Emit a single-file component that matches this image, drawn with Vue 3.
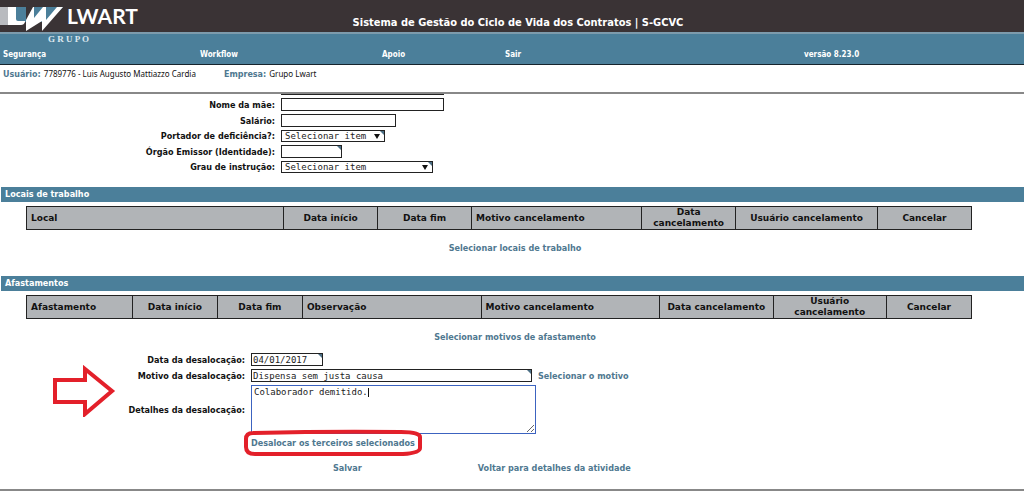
<script setup>
import { ref } from 'vue'

const menu = ['Segurança', 'Workflow', 'Apoio', 'Sair']

const workplaces = [
  { label: 'Local', left: true },
  { label: 'Data início' },
  { label: 'Data fim' },
  { label: 'Motivo cancelamento', left: true },
  { label: 'Data cancelamento' },
  { label: 'Usuário cancelamento' },
  { label: 'Cancelar' },
]
const leaves = [
  { label: 'Afastamento', left: true },
  { label: 'Data início' },
  { label: 'Data fim' },
  { label: 'Observação', left: true },
  { label: 'Motivo cancelamento', left: true },
  { label: 'Data cancelamento' },
  { label: 'Usuário cancelamento' },
  { label: 'Cancelar' },
]

const releaseDate = ref('04/01/2017')
const reason = ref('Dispensa sem justa causa')
const details = ref('Colaborador demitido.')
</script>

<template>
  <div class="page">
    <header>
      <div class="banner">
        <svg class="logo" viewBox="0 0 145 48" role="img" aria-label="Lwart Grupo">
          <rect x="0" y="7" width="9" height="18" fill="#b9bbbf" />
          <path d="M16 7H26V22H16ZM34 7H63L48 22H34Z" fill="#4b7f9a" />
          <path d="M8 7H16V19Q16 21 18 21H25V22Q24 25 21 25H8Z" fill="#fff" />
          <path d="M26 20L33 7H34V18L43 7H46V20L57 7H63L42 31V21L26 31Z" fill="#fff" />
          <text x="67" y="24" class="logo-name">LWART</text>
          <text x="48" y="42" class="logo-sub">G R U P O</text>
        </svg>
        <h1>Sistema de Gestão do Ciclo de Vida dos Contratos | S-GCVC</h1>
      </div>
      <nav>
        <a v-for="item in menu" :key="item" href="#">{{ item }}</a>
        <span>versão 8.23.0</span>
      </nav>
      <div class="session">
        <p><b>Usuário:</b> 7789776 - Luis Augusto Mattiazzo Cardia</p>
        <p><b>Empresa:</b> Grupo Lwart</p>
      </div>
    </header>

    <main>
      <form class="fields personal" @submit.prevent>
        <span></span><input class="w-long previous" type="text" aria-label="Nome do pai" />
        <label for="mother">Nome da mãe:</label>
        <input id="mother" class="w-long" type="text" />
        <label for="salary">Salário:</label>
        <input id="salary" class="w-mid" type="text" />
        <label for="disability">Portador de deficiência?:</label>
        <div class="control drop w-select">
          <select id="disability"><option>Selecionar item</option></select>
        </div>
        <label for="issuer">Órgão Emissor (Identidade):</label>
        <div class="control w-issuer"><input id="issuer" type="text" /></div>
        <label for="education">Grau de instrução:</label>
        <div class="control drop w-education">
          <select id="education"><option>Selecionar item</option></select>
        </div>
      </form>

      <section>
        <h2>Locais de trabalho</h2>
        <table class="workplaces">
          <colgroup><col v-for="c in workplaces" :key="c.label" /></colgroup>
          <thead>
            <tr><th v-for="c in workplaces" :key="c.label" :class="{ left: c.left }">{{ c.label }}</th></tr>
          </thead>
        </table>
        <p class="pick"><a href="#">Selecionar locais de trabalho</a></p>
      </section>

      <section>
        <h2>Afastamentos</h2>
        <table class="leaves">
          <colgroup><col v-for="c in leaves" :key="c.label" /></colgroup>
          <thead>
            <tr><th v-for="c in leaves" :key="c.label" :class="{ left: c.left }">{{ c.label }}</th></tr>
          </thead>
        </table>
        <p class="pick"><a href="#">Selecionar motivos de afastamento</a></p>
      </section>

      <form class="fields release" @submit.prevent>
        <svg class="arrow" viewBox="0 0 64 52" aria-hidden="true">
          <path d="M3 15H33V4L60 26L33 49V37H3Z" fill="none" stroke="#e3202a" stroke-width="4" />
        </svg>
        <label for="date">Data da desalocação:</label>
        <div class="control w-date"><input id="date" v-model="releaseDate" type="text" /></div>
        <label for="reason">Motivo da desalocação:</label>
        <div class="line">
          <div class="control w-reason"><input id="reason" v-model="reason" type="text" /></div>
          <a href="#">Selecionar o motivo</a>
        </div>
        <label for="details">Detalhes da desalocação:</label>
        <div class="details">
          <textarea id="details" v-model="details"></textarea>
          <i class="caret"></i>
        </div>
        <div class="submit">
          <a href="#">Desalocar os terceiros selecionados</a>
          <svg class="ring" viewBox="0 0 180 28" aria-hidden="true">
            <path d="M10 4Q90 2 158 3Q177 3 177 8V19Q177 24 160 25H12Q3 25 3 18V10Q3 4 10 4Z" fill="none" stroke="#e3202a" stroke-width="4" />
          </svg>
        </div>
      </form>

      <footer>
        <a href="#">Salvar</a>
        <a href="#">Voltar para detalhes da atividade</a>
      </footer>
    </main>
  </div>
</template>

<style>
body {
  background: #fff;
}
</style>

<style scoped>
.page {
  font: 700 9px/12px "DejaVu Sans Condensed", "DejaVu Sans", sans-serif;
  color: #111;
}
h1, h2, p {
  margin: 0;
}
a {
  color: #4f7890;
  text-decoration: none;
}
.banner {
  position: relative;
  box-sizing: border-box;
  height: 34px;
  padding-top: 15px;
  background: #3a3335;
  border-bottom: 2px solid #7d9bac;
}
.logo {
  position: absolute;
  top: 0;
  left: 0;
  width: 145px;
  height: 48px;
}
.logo-name {
  font: 700 21px Lato, sans-serif;
  fill: #fff;
}
.logo-sub {
  font: 700 9px "Liberation Serif", serif;
  fill: #dce8ef;
}
h1 {
  padding-left: 12px;
  text-align: center;
  font: 700 11px/15px "DejaVu Sans Condensed", "DejaVu Sans", sans-serif;
  color: #fff;
}
nav {
  display: grid;
  grid-template-columns: 197fr 182fr 123fr 299fr 217fr;
  box-sizing: border-box;
  height: 31px;
  padding: 15px 3px 0;
  background: #4b7f9a;
  border-bottom: 1px solid #16242c;
  font-size: 8px;
  color: #fff;
}
nav a {
  color: #fff;
}
.session {
  display: flex;
  gap: 28px;
  box-sizing: border-box;
  height: 29px;
  padding: 3px 3px 0;
  border-bottom: 2px solid #888;
  font: 400 8px/12px "Noto Sans", sans-serif;
}
.session b {
  margin-right: 1px;
  color: #4f7890;
  font-family: "DejaVu Sans", sans-serif;
}
.fields {
  display: grid;
  column-gap: 6px;
  row-gap: 3px;
  align-items: center;
}
.personal {
  grid-template-columns: 275px 1fr;
}
.release {
  position: relative;
  grid-template-columns: 245px 1fr;
  margin-top: 2px;
}
label {
  text-align: right;
}
.fields > label {
  height: 12px;
}
input, select, textarea {
  box-sizing: border-box;
  margin: 0;
  padding: 0 1px;
  border: 1px solid #222;
  border-radius: 0;
  outline: 0;
  background: #fff;
  color: #222;
  font: 9px/10px "DejaVu Sans Mono", monospace;
}
input {
  height: 13px;
}
.personal .previous {
  height: 1px;
  border-top: 0;
}
select {
  height: 12px;
  padding-left: 3px;
  appearance: none;
}
.control {
  position: relative;
  display: flex;
}
.control input, .control select {
  width: 100%;
}
.control::after {
  content: "";
  position: absolute;
  top: 1px;
  right: 1px;
  border-top: 4px solid #4b6f85;
  border-left: 4px solid transparent;
}
.drop::before {
  content: "";
  position: absolute;
  top: 4px;
  right: 5px;
  border-top: 5px solid #111;
  border-left: 3px solid transparent;
  border-right: 3px solid transparent;
}
.w-long { width: 163px; }
.w-mid { width: 115px; }
.w-select { width: 104px; }
.w-issuer { width: 61px; }
.w-education { width: 152px; }
.w-date { width: 72px; }
.w-reason { width: 281px; }
section {
  padding-top: 14px;
}
h2 {
  margin-left: 1px;
  padding-left: 4px;
  background: #4b7f9a;
  color: #fff;
  font-size: 9px;
  line-height: 15px;
}
table {
  width: calc(100% - 78px);
  margin: 4px 0 0 26px;
  border-collapse: collapse;
  table-layout: fixed;
}
th {
  padding: 0 4px;
  border: 1px solid #222;
  background: #b1b4b7;
  font: 700 9px/11px "DejaVu Sans", sans-serif;
}
th.left {
  text-align: left;
}
.workplaces col:nth-child(1) { width: 27.2%; }
.workplaces col:nth-child(2) { width: 9.95%; }
.workplaces col:nth-child(3) { width: 9.95%; }
.workplaces col:nth-child(4) { width: 18%; }
.workplaces col:nth-child(5) { width: 9.95%; }
.workplaces col:nth-child(6) { width: 15%; }
.leaves col:nth-child(1) { width: 11.2%; }
.leaves col:nth-child(2) { width: 9%; }
.leaves col:nth-child(3) { width: 9%; }
.leaves col:nth-child(4) { width: 18.9%; }
.leaves col:nth-child(5) { width: 18.9%; }
.leaves col:nth-child(6) { width: 12%; }
.leaves col:nth-child(7) { width: 12%; }
.pick {
  padding: 12px 0 8px 6px;
  text-align: center;
}
.line {
  display: flex;
  align-items: center;
  gap: 6px;
  height: 13px;
}
.details {
  position: relative;
  display: flex;
  width: 285px;
}
.details textarea {
  width: 100%;
  height: 49px;
  padding: 1px 2px;
  border: 1px solid #3c63c0;
}
.caret {
  position: absolute;
  top: 3px;
  left: 117px;
  width: 1px;
  height: 9px;
  background: #111;
}
.submit {
  position: relative;
  grid-column: 2;
  justify-self: start;
}
.ring {
  position: absolute;
  top: -8px;
  left: -8px;
  width: 180px;
  height: 28px;
}
.arrow {
  position: absolute;
  top: 12px;
  left: 52px;
  width: 64px;
  height: 52px;
}
footer {
  display: flex;
  gap: 116px;
  padding: 13px 0 15px 333px;
  border-bottom: 2px solid #888;
}
</style>
